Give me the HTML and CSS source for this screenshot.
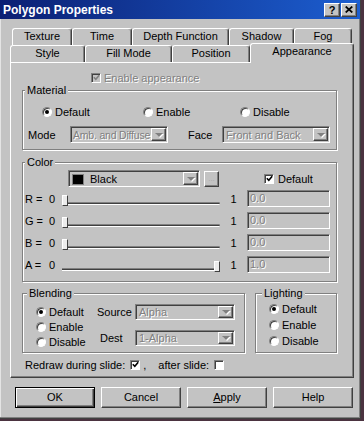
FILE: index.html
```html
<!DOCTYPE html>
<html lang="en">
<head>
    <meta charset="UTF-8">
    <title>Polygon Properties</title>
    <link rel="stylesheet" href="styles.css">
</head>
<body>
<div class="dialog">
    <div class="titlebar">
        <span>Polygon Properties</span>
        <div class="caption">
            <span class="cap-btn">?</span>
            <span class="cap-btn"><svg width="8" height="7" viewBox="0 0 8 7"><path d="M0.7 0.5 L7.3 6.5 M7.3 0.5 L0.7 6.5" stroke="#000" stroke-width="1.7"/></svg></span>
        </div>
    </div>

    <div class="tabs">
        <div class="tab-row back">
            <div class="tab">Texture</div>
            <div class="tab">Time</div>
            <div class="tab">Depth Function</div>
            <div class="tab">Shadow</div>
            <div class="tab">Fog</div>
        </div>
        <div class="tab-row front">
            <div class="tab">Style</div>
            <div class="tab">Fill Mode</div>
            <div class="tab">Position</div>
            <div class="tab active">Appearance</div>
        </div>
    </div>

    <div class="panel">
        <div class="enable-row">
            <span class="check disabled"><svg width="7" height="7" viewBox="0 0 7 7"><path d="M0.8 3.2 L2.8 5.2 L6.2 1.2" stroke="#808080" stroke-width="1.6" fill="none"/></svg></span>
            <span class="dim">Enable appearance</span>
        </div>

        <fieldset class="group material">
            <legend>Material</legend>
            <div class="radio-row">
                <span class="radio"><span class="dot on"></span>Default</span>
                <span class="radio"><span class="dot"></span>Enable</span>
                <span class="radio"><span class="dot"></span>Disable</span>
            </div>
            <div class="mode-row">
                <span class="lbl-mode">Mode</span>
                <div class="combo w-mode"><span class="combo-text dim tight">Amb. and Diffuse</span><span class="drop"><i></i></span></div>
                <span class="lbl-face">Face</span>
                <div class="combo w-face"><span class="combo-text dim">Front and Back</span><span class="drop"><i></i></span></div>
            </div>
        </fieldset>

        <fieldset class="group color">
            <legend>Color</legend>
            <div class="swatch-row">
                <div class="combo w-color"><span class="combo-text"><span class="swatch"></span>Black</span><span class="drop"><i></i></span></div>
                <span class="more-btn">...</span>
                <span class="check-label"><span class="check"><svg width="7" height="7" viewBox="0 0 7 7"><path d="M0.8 3.2 L2.8 5.2 L6.2 1.2" stroke="#000" stroke-width="1.6" fill="none"/></svg></span>Default</span>
            </div>
            <div class="slider-row">
                <span class="chan">R =</span><span class="min">0</span>
                <div class="slider"><div class="track"></div><div class="thumb" style="left: 0px"></div></div>
                <span class="max">1</span><span class="field">0.0</span>
            </div>
            <div class="slider-row">
                <span class="chan">G =</span><span class="min">0</span>
                <div class="slider"><div class="track"></div><div class="thumb" style="left: 0px"></div></div>
                <span class="max">1</span><span class="field">0.0</span>
            </div>
            <div class="slider-row">
                <span class="chan">B =</span><span class="min">0</span>
                <div class="slider"><div class="track"></div><div class="thumb" style="left: 0px"></div></div>
                <span class="max">1</span><span class="field">0.0</span>
            </div>
            <div class="slider-row">
                <span class="chan">A =</span><span class="min">0</span>
                <div class="slider"><div class="track"></div><div class="thumb" style="left: 152px"></div></div>
                <span class="max">1</span><span class="field">1.0</span>
            </div>
        </fieldset>

        <div class="bottom-groups">
            <fieldset class="group blending">
                <legend>Blending</legend>
                <div class="blend-body">
                    <div class="radio-col">
                        <span class="radio"><span class="dot on"></span>Default</span>
                        <span class="radio"><span class="dot"></span>Enable</span>
                        <span class="radio"><span class="dot"></span>Disable</span>
                    </div>
                    <div class="blend-fields">
                        <div class="blend-line">
                            <span class="lbl-src">Source</span>
                            <div class="combo w-blend"><span class="combo-text dim">Alpha</span><span class="drop"><i></i></span></div>
                        </div>
                        <div class="blend-line">
                            <span class="lbl-dest">Dest</span>
                            <div class="combo w-blend"><span class="combo-text dim">1-Alpha</span><span class="drop"><i></i></span></div>
                        </div>
                    </div>
                </div>
            </fieldset>
            <fieldset class="group lighting">
                <legend>Lighting</legend>
                <div class="radio-col light">
                    <span class="radio"><span class="dot on"></span>Default</span>
                    <span class="radio"><span class="dot"></span>Enable</span>
                    <span class="radio"><span class="dot"></span>Disable</span>
                </div>
            </fieldset>
        </div>

        <div class="redraw-row">
            <span>Redraw during slide:</span>
            <span class="check"><svg width="7" height="7" viewBox="0 0 7 7"><path d="M0.8 3.2 L2.8 5.2 L6.2 1.2" stroke="#000" stroke-width="1.6" fill="none"/></svg></span>
            <span class="comma">,</span>
            <span class="after">after slide:</span>
            <span class="check"></span>
        </div>
    </div>

    <div class="buttons">
        <span class="btn default">OK</span>
        <span class="btn">Cancel</span>
        <span class="btn"><u>A</u>pply</span>
        <span class="btn">Help</span>
    </div>
</div>
</body>
</html>
```

FILE: styles.css
```css
* {
    box-sizing: border-box;
}
html, body {
    margin: 0;
}
body {
    background: #4b3340;
    font-family: "Liberation Sans", Arial, sans-serif;
    font-size: 11px;
    color: #000;
    width: 364px;
    height: 421px;
}
.dialog {
    width: 361px;
    height: 419px;
    background: #c3c3c3;
    border-right: 1px solid #404040;
    border-bottom: 1px solid #404040;
    box-shadow: inset -1px -1px #808080, inset 1px 0 #e4e4e4;
}
.titlebar {
    height: 19px;
    display: flex;
    align-items: center;
    justify-content: space-between;
    padding: 0 3px 0 3px;
    background: linear-gradient(to right, #0b1f73, #1c5ed0);
    color: #fff;
    font-weight: bold;
    font-size: 12px;
}
.caption {
    display: flex;
    gap: 1px;
}
.cap-btn {
    width: 16px;
    height: 14px;
    display: flex;
    align-items: center;
    justify-content: center;
    background: #c3c3c3;
    border: 1px solid;
    border-color: #fff #404040 #404040 #fff;
    box-shadow: inset -1px -1px #808080;
    color: #000;
    font-size: 11px;
    font-weight: bold;
}

/* tabs */
.tabs {
    padding-top: 9px;
}
.tab-row {
    display: grid;
}
.back {
    margin-left: 12px;
    grid-template-columns: 60px 60px 97px 65px 58px;
}
.front {
    margin-left: 10px;
    grid-template-columns: 75px 87px 78px 104px;
    align-items: start;
}
.tab {
    height: 17px;
    border-top: 1px solid #fff;
    border-left: 1px solid #fff;
    border-right: 1px solid #404040;
    box-shadow: inset -1px 0 #808080;
    border-radius: 3px 3px 0 0;
    text-align: center;
    line-height: 15px;
    background: #c3c3c3;
}
.tab.active {
    position: relative;
    z-index: 1;
    height: 20px;
    margin-top: -2px;
    margin-bottom: -1px;
    line-height: 14px;
}

/* panel */
.panel {
    margin-left: 10px;
    width: 344px;
    height: 316px;
    padding-left: 11px;
    border: 1px solid;
    border-color: #fff #404040 #404040 #fff;
    box-shadow: inset -1px -1px #808080;
}
.dim {
    color: #808080;
    text-shadow: 1px 1px 0 #fff;
}
.enable-row {
    margin: 9px 0 0 69px;
    height: 11px;
    display: flex;
    align-items: center;
    gap: 3px;
}
.check {
    width: 10px;
    height: 10px;
    flex: none;
    display: inline-flex;
    align-items: center;
    justify-content: center;
    background: #fff;
    border: 1px solid;
    border-color: #808080 #fff #fff #808080;
    box-shadow: inset 1px 1px #404040;
}
.check.disabled {
    background: #c3c3c3;
}

/* group boxes */
.group {
    margin: 0;
    padding: 0;
    min-width: 0;
    border: 1px solid #808080;
    box-shadow: inset 1px 1px #fff, 1px 1px #fff;
}
.group legend {
    padding: 0 2px;
    margin-left: 2px;
    line-height: 13px;
    background: #c3c3c3;
}
.material {
    width: 315px;
    margin-top: 1px;
    padding-bottom: 6px;
}
.radio-row {
    display: grid;
    grid-template-columns: 101px 97px auto;
    padding-left: 19px;
    margin-top: 8px;
    height: 13px;
}
.radio {
    display: flex;
    align-items: center;
    gap: 3px;
}
.dot {
    width: 10px;
    height: 10px;
    flex: none;
    border-radius: 50%;
    background: #fff;
    border: 1px solid;
    border-color: #808080 #fff #fff #808080;
    box-shadow: inset 1px 1px #404040;
    display: flex;
    align-items: center;
    justify-content: center;
}
.dot.on::after {
    content: "";
    width: 4px;
    height: 4px;
    border-radius: 50%;
    background: #000;
}
.mode-row {
    display: flex;
    align-items: center;
    margin-top: 8px;
    padding-left: 5px;
}
.lbl-mode {
    width: 42px;
}
.lbl-face {
    width: 34px;
    margin-left: 20px;
}
.combo {
    height: 17px;
    display: flex;
    border: 1px solid;
    border-color: #808080 #fff #fff #808080;
    box-shadow: inset 1px 1px #404040;
    background: #c3c3c3;
}
.combo-text {
    flex: 1;
    min-width: 0;
    padding: 1px 0 0 3px;
    line-height: 13px;
    white-space: nowrap;
    overflow: hidden;
    display: flex;
    align-items: center;
}
.combo-text.tight {
    padding-left: 2px;
    font-size: 10.5px;
    letter-spacing: -0.2px;
}
.drop {
    width: 15px;
    flex: none;
    margin: 1px 1px 1px 0;
    display: flex;
    align-items: center;
    justify-content: center;
    border: 1px solid;
    border-color: #fff #404040 #404040 #fff;
    box-shadow: inset -1px -1px #808080;
}
.drop i {
    width: 0;
    height: 0;
    border-top: 4px solid #808080;
    border-left: 4px solid transparent;
    border-right: 4px solid transparent;
    filter: drop-shadow(1px 1px 0 #fff);
}
.w-mode {
    width: 98px;
}
.w-face {
    width: 108px;
}
.w-color {
    width: 132px;
    margin-left: 45px;
}
.w-blend {
    width: 100px;
    height: 16px;
}

/* color group */
.color {
    width: 315px;
    margin-top: 6px;
    padding-bottom: 8px;
}
.swatch-row {
    display: flex;
    align-items: center;
    margin-top: 1px;
}
.swatch {
    width: 12px;
    height: 11px;
    background: #000;
    border: 1px solid #808080;
    margin-right: 6px;
}
.more-btn {
    width: 15px;
    height: 16px;
    margin-left: 4px;
    border: 1px solid;
    border-color: #fff #404040 #404040 #fff;
    box-shadow: inset -1px -1px #808080;
    color: #a8a8a8;
    font-size: 8px;
    text-align: center;
    line-height: 14px;
}
.check-label {
    display: flex;
    align-items: center;
    gap: 4px;
    margin-left: 45px;
}
.slider-row {
    display: flex;
    align-items: center;
    height: 17px;
    margin-top: 5px;
}
.swatch-row + .slider-row {
    margin-top: 3px;
}
.chan {
    width: 26px;
    padding-left: 2px;
}
.min {
    width: 13px;
}
.slider {
    position: relative;
    width: 158px;
    height: 17px;
    padding-top: 12px;
}
.track {
    height: 3px;
    background: #404040;
    border-top: 1px solid #808080;
    border-bottom: 1px solid #fff;
    border-radius: 0 2px 2px 0;
}
.thumb {
    position: absolute;
    top: 5px;
    width: 6px;
    height: 11px;
    background: #ececec;
    border: 1px solid;
    border-color: #fff #404040 #404040 #fff;
}
.max {
    width: 27px;
    text-align: center;
}
.field {
    width: 83px;
    height: 17px;
    padding-left: 2px;
    line-height: 15px;
    border: 1px solid;
    border-color: #808080 #fff #fff #808080;
    box-shadow: inset 1px 1px #404040;
    color: #808080;
    text-shadow: 1px 1px 0 #fff;
}

/* blending + lighting */
.bottom-groups {
    display: flex;
    gap: 10px;
    margin-top: 5px;
}
.blending {
    width: 223px;
    padding-bottom: 3px;
}
.blending legend {
    margin-left: 4px;
}
.lighting {
    width: 82px;
    padding-bottom: 3px;
}
.lighting legend {
    margin-left: 6px;
}
.blend-body {
    display: flex;
}
.radio-col {
    width: 74px;
    padding-left: 13px;
    margin-top: 4px;
    display: grid;
    grid-auto-rows: 15px;
}
.radio-col.light {
    margin-top: 1px;
    grid-auto-rows: 16px;
}
.blend-fields {
    margin-top: 4px;
    display: flex;
    flex-direction: column;
    gap: 10px;
}
.blend-line {
    display: flex;
    align-items: center;
}
.lbl-src {
    width: 38px;
}
.lbl-dest {
    width: 38px;
    padding-left: 3px;
}
.redraw-row {
    display: flex;
    align-items: center;
    height: 13px;
    margin: 5px 0 0 3px;
}
.redraw-row .check {
    margin-left: 5px;
}
.comma {
    margin-left: 3px;
}
.after {
    margin-left: 12px;
}

/* dialog buttons */
.buttons {
    display: flex;
    gap: 6px;
    margin: 9px 0 0 15px;
}
.btn {
    width: 80px;
    height: 21px;
    text-align: center;
    line-height: 19px;
    border: 1px solid;
    border-color: #fff #404040 #404040 #fff;
    box-shadow: inset -1px -1px #808080;
}
.btn.default {
    border-color: #000;
    box-shadow: inset 1px 1px #fff, inset -1px -1px #404040, inset -2px -2px #808080;
}
```
